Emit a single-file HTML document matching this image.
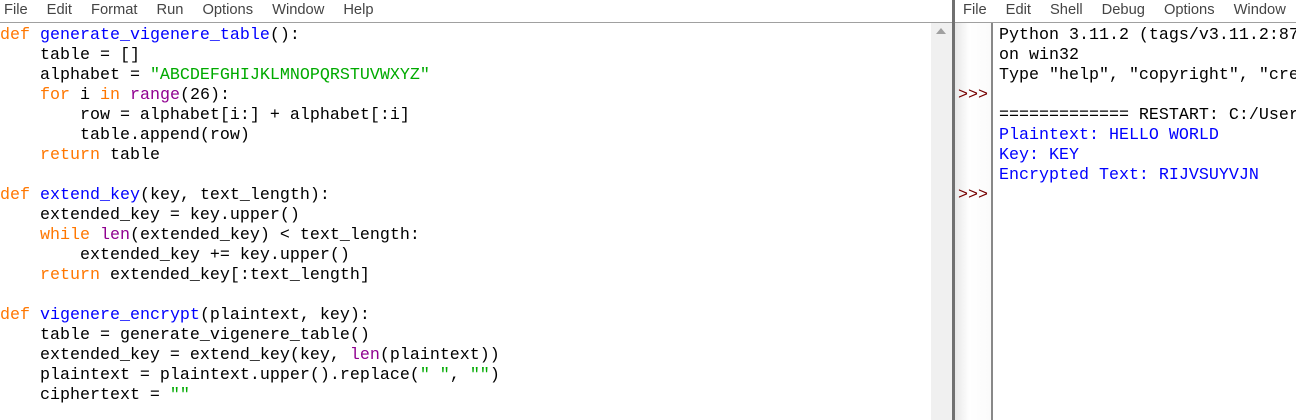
<!DOCTYPE html><html><head><style>
body{margin:0;width:1296px;height:420px;overflow:hidden;background:#fff;position:relative;font-family:"Liberation Mono",monospace}
.menu{position:absolute;top:0;height:22px;font:14.7px "Liberation Sans",sans-serif;color:#444;line-height:20px;white-space:pre;border-bottom:1px solid #a0a0a0;background:#fff;overflow:hidden}
.menu span{margin-right:19px}
pre{margin:0;position:absolute;font:16.67px/20px "Liberation Mono",monospace;color:#000;overflow:hidden}
.k{color:#ff7700}.d{color:#0000ff}.s{color:#00aa00}.b{color:#900090}.o{color:#0000ff}.p{color:#770000}
</style></head><body>
<div class="menu" style="left:0;width:948px;padding-left:4px"><span>File</span><span>Edit</span><span>Format</span><span>Run</span><span>Options</span><span>Window</span><span>Help</span></div>
<pre style="left:0;top:26px;width:930px"><span class="k">def</span> <span class="d">generate_vigenere_table</span>():
    table = []
    alphabet = <span class="s">"ABCDEFGHIJKLMNOPQRSTUVWXYZ"</span>
    <span class="k">for</span> i <span class="k">in</span> <span class="b">range</span>(26):
        row = alphabet[i:] + alphabet[:i]
        table.append(row)
    <span class="k">return</span> table

<span class="k">def</span> <span class="d">extend_key</span>(key, text_length):
    extended_key = key.upper()
    <span class="k">while</span> <span class="b">len</span>(extended_key) &lt; text_length:
        extended_key += key.upper()
    <span class="k">return</span> extended_key[:text_length]

<span class="k">def</span> <span class="d">vigenere_encrypt</span>(plaintext, key):
    table = generate_vigenere_table()
    extended_key = extend_key(key, <span class="b">len</span>(plaintext))
    plaintext = plaintext.upper().replace(<span class="s">" "</span>, <span class="s">""</span>)
    ciphertext = <span class="s">""</span></pre>
<div style="position:absolute;left:931px;top:23px;width:21px;height:397px;background:#f0f0f0"></div>
<div style="position:absolute;left:936px;top:28px;width:0;height:0;border-left:5px solid transparent;border-right:5px solid transparent;border-bottom:6px solid #a0a0a0"></div>
<div style="position:absolute;left:952px;top:0;width:3px;height:420px;background:#707070"></div>
<div class="menu" style="left:955px;width:333px;padding-left:8px"><span>File</span><span>Edit</span><span>Shell</span><span>Debug</span><span>Options</span><span>Window</span></div>
<div style="position:absolute;left:955px;top:23px;width:37px;height:397px;background:linear-gradient(90deg,#e8e8e8,#fff 40%,#fafafa)"></div>
<div style="position:absolute;left:991px;top:23px;width:2px;height:397px;background:#888"></div>
<pre style="left:958px;top:86px" class="p">&gt;&gt;&gt;</pre>
<pre style="left:958px;top:186px" class="p">&gt;&gt;&gt;</pre>
<pre style="left:999px;top:26px;width:297px">Python 3.11.2 (tags/v3.11.2:878ead1, Feb  7 2023
on win32
Type "help", "copyright", "credits" or "license()"

============= RESTART: C:/Users
<span class="o">Plaintext: HELLO WORLD</span>
<span class="o">Key: KEY</span>
<span class="o">Encrypted Text: RIJVSUYVJN</span></pre>
</body></html>
